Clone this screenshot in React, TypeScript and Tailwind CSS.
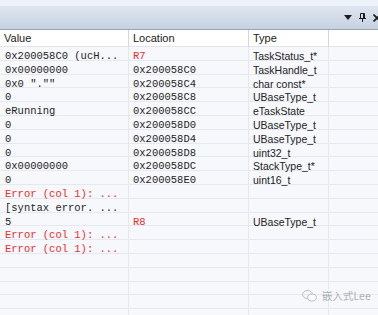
const ROWS: { v: string; l: string; t: string; vRed?: boolean; lRed?: boolean }[] = [
  { v: "0x200058C0 (ucH...", l: "R7", t: "TaskStatus_t*", lRed: true },
  { v: "0x00000000", l: "0x200058C0", t: "TaskHandle_t" },
  { v: '0x0 "."" ', l: "0x200058C4", t: "char const*" },
  { v: "0", l: "0x200058C8", t: "UBaseType_t" },
  { v: "eRunning", l: "0x200058CC", t: "eTaskState" },
  { v: "0", l: "0x200058D0", t: "UBaseType_t" },
  { v: "0", l: "0x200058D4", t: "UBaseType_t" },
  { v: "0", l: "0x200058D8", t: "uint32_t" },
  { v: "0x00000000", l: "0x200058DC", t: "StackType_t*" },
  { v: "0", l: "0x200058E0", t: "uint16_t" },
  { v: "Error (col 1): ...", l: "", t: "", vRed: true },
  { v: "[syntax error. ...", l: "", t: "" },
  { v: "5", l: "R8", t: "UBaseType_t", lRed: true },
  { v: "Error (col 1): ...", l: "", t: "", vRed: true },
  { v: "Error (col 1): ...", l: "", t: "", vRed: true },
  { v: "", l: "", t: "" },
  { v: "", l: "", t: "" },
  { v: "", l: "", t: "" },
  { v: "", l: "", t: "" },
  { v: "", l: "", t: "" },
];

const mono = "font-['Liberation_Mono',monospace] text-[10.5px]";
const sans = "font-['Liberation_Sans',Arial,sans-serif]";

export default function App() {
  return (
    <div className="relative w-[378px] h-[315px] overflow-hidden bg-[#f7f8fc]">
      <div className="h-[6px] bg-[#eef2f9]" />
      <div className="h-[24px] bg-gradient-to-b from-[#dfe6f1] to-[#c6d1e0] border-b border-[#98a3b3] flex items-center justify-end gap-[7px] -mr-[3px]">
        <svg width="8" height="6" viewBox="0 0 8 6"><path d="M0 0H8L4 5Z" fill="#1c1c1c" /></svg>
        <svg width="7" height="9" viewBox="0 0 7 9">
          <path d="M1.5 0.5H5.5V5.5H1.5Z M0 5.5H7 M3.5 5.5V9 M4.5 0.5V5.5" stroke="#1c1c1c" strokeWidth="1" fill="none" />
        </svg>
        <svg width="8" height="8" viewBox="0 0 8 8"><path d="M0.5 0.5L7.5 7.5M7.5 0.5L0.5 7.5" stroke="#1c1c1c" strokeWidth="1.6" /></svg>
      </div>
      <div className={`grid grid-cols-[129px_120px_80px_1fr] h-[17px] bg-white border-b border-[#e2e4ea] text-[11px] text-[#222] ${sans}`}>
        <div className="border-r border-[#d5d7dc] pl-[4px] flex items-center">Value</div>
        <div className="border-r border-[#d5d7dc] pl-[4px] flex items-center">Location</div>
        <div className="border-r border-[#d5d7dc] pl-[4px] flex items-center">Type</div>
        <div />
      </div>
      {ROWS.map((r, i) => (
        <div key={i} className="grid grid-cols-[129px_120px_80px_1fr] h-[13.8px] border-b border-[#e6e8ef]">
          <div className={`border-r border-[#e6e8ef] pl-[5px] pt-[2px] flex items-center whitespace-pre ${mono} ${r.vRed ? "text-[#ee2a2a]" : "text-[#1e1e1e]"}`}>{r.v}</div>
          <div className={`border-r border-[#e6e8ef] pl-[4px] pt-[2px] flex items-center ${mono} ${r.lRed ? "text-[#ee2a2a]" : "text-[#1e1e1e]"}`}>{r.l}</div>
          <div className={`border-r border-[#e6e8ef] pl-[4px] pt-[2px] flex items-center text-[10.5px] text-[#222] ${sans}`}>{r.t}</div>
          <div />
        </div>
      ))}
      <div className="absolute left-[302px] top-[290px] flex items-center gap-[5px] opacity-60">
        <svg width="15" height="12" viewBox="0 0 15 12" fill="none" stroke="#9a9a9a" strokeWidth="1">
          <ellipse cx="5.5" cy="4.5" rx="5" ry="4" />
          <ellipse cx="10" cy="7.5" rx="4.3" ry="3.5" fill="#fff" />
        </svg>
        <span className="text-[10.5px] text-[#808080] font-['Noto_Sans_CJK_SC',sans-serif] leading-none">嵌入式Lee</span>
      </div>
    </div>
  );
}
